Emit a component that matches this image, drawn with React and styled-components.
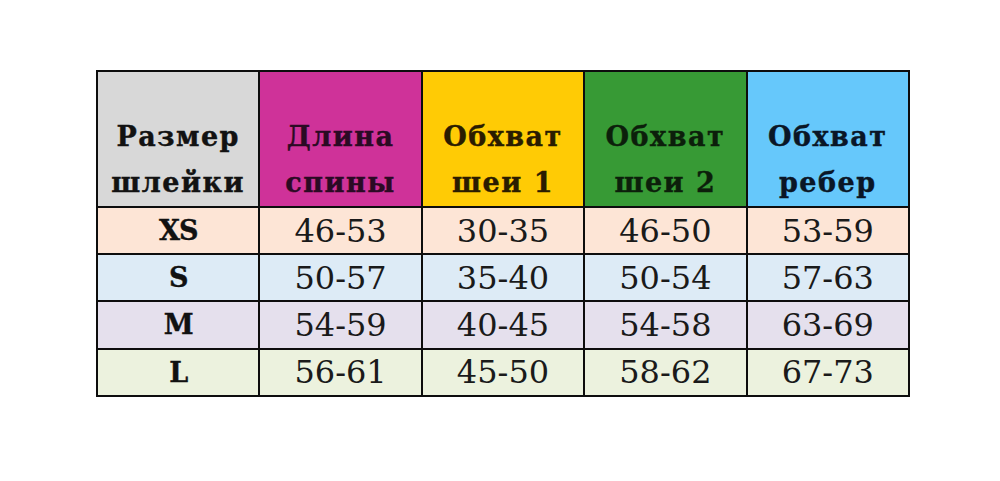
import React from "react";
import styled, { createGlobalStyle } from "styled-components";

const Global = createGlobalStyle`
  html, body {
    margin: 0;
    padding: 0;
    background: #ffffff;
  }
  body {
    width: 1000px;
    height: 481px;
    overflow: hidden;
  }
`;

const Page = styled.div`
  padding: 70px 0 0 96px;
`;

const Grid = styled.div`
  display: grid;
  grid-template-columns: repeat(5, 160.4px);
  grid-template-rows: 134px repeat(4, 45.2px);
  gap: 2px;
  padding: 2px;
  width: max-content;
  background: #0d0d0d;
`;

const HeadCell = styled.div`
  background: ${(p) => p.bg};
  color: ${(p) => p.ink};
  display: flex;
  flex-direction: column;
  justify-content: flex-end;
  align-items: center;
  padding-bottom: 0;
  font-family: "DejaVu Serif", "Liberation Serif", serif;
  font-weight: 700;
  font-size: 27px;
  line-height: 46px;
  letter-spacing: 1.5px;
  text-align: center;
  -webkit-text-stroke: 0.4px currentColor;
`;

const SizeCell = styled.div`
  background: ${(p) => p.bg};
  display: flex;
  align-items: center;
  justify-content: center;
  font-family: "DejaVu Serif", "Liberation Serif", serif;
  font-weight: 700;
  font-size: 27px;
  color: #111;
  letter-spacing: -1px;
  -webkit-text-stroke: 0.4px currentColor;
`;

const ValueCell = styled.div`
  background: ${(p) => p.bg};
  display: flex;
  align-items: center;
  justify-content: center;
  font-family: "DejaVu Serif", "Liberation Serif", serif;
  font-size: 32px;
  color: #1a1a1a;
  letter-spacing: 0;
`;

const heads = [
  { lines: ["Размер", "шлейки"], bg: "#d8d8d8", ink: "#121212" },
  { lines: ["Длина", "спины"], bg: "#cf3299", ink: "#2b0a24" },
  { lines: ["Обхват", "шеи 1"], bg: "#ffcb05", ink: "#2a1c00" },
  { lines: ["Обхват", "шеи 2"], bg: "#379a35", ink: "#0c1f0b" },
  { lines: ["Обхват", "ребер"], bg: "#66c8fb", ink: "#0a1626" },
];

const rows = [
  { size: "XS", bg: "#fde5d6", values: ["46-53", "30-35", "46-50", "53-59"] },
  { size: "S", bg: "#ddebf6", values: ["50-57", "35-40", "50-54", "57-63"] },
  { size: "M", bg: "#e5e0ed", values: ["54-59", "40-45", "54-58", "63-69"] },
  { size: "L", bg: "#ecf2de", values: ["56-61", "45-50", "58-62", "67-73"] },
];

export default function App() {
  return (
    <>
      <Global />
      <Page>
        <Grid>
          {heads.map((h) => (
            <HeadCell key={h.lines[0] + h.lines[1]} bg={h.bg} ink={h.ink}>
              {h.lines.map((l) => (
                <span key={l}>{l}</span>
              ))}
            </HeadCell>
          ))}
          {rows.map((r) => (
            <React.Fragment key={r.size}>
              <SizeCell bg={r.bg}>{r.size}</SizeCell>
              {r.values.map((v, i) => (
                <ValueCell key={i} bg={r.bg}>
                  {v}
                </ValueCell>
              ))}
            </React.Fragment>
          ))}
        </Grid>
      </Page>
    </>
  );
}
